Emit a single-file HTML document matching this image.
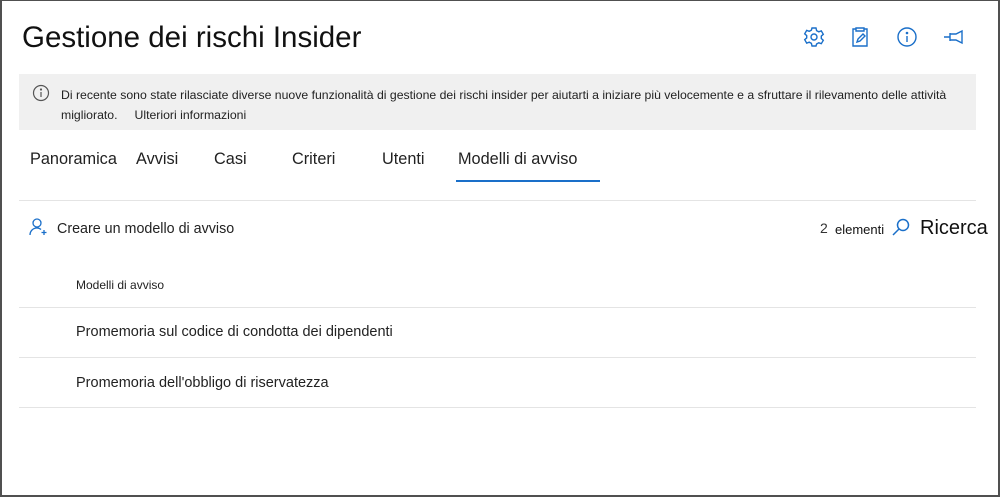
<!DOCTYPE html>
<html><head><style>
body{margin:0;width:1000px;height:498px;overflow:hidden;font-family:"Liberation Sans",Arial,sans-serif;background:#fff}
.frame{position:absolute;left:0;top:0;width:996px;height:494px;border:2px solid #505050;border-top:1px solid #505050}
.a{position:absolute;white-space:nowrap}
</style></head><body>
<div class="frame"></div>
<div class="a" style="left:22px;top:21px;font-size:29.5px;color:#111">Gestione dei rischi Insider</div>
<svg class="a" style="left:803px;top:26px" width="22" height="22" viewBox="0 0 22 22" fill="none" stroke="#1a6fc9" stroke-width="1.4"><path d="M9 2h4l.6 2.6 2.2 1.2 2.5-.9 2 3.4-2 1.8v2.4l2 1.8-2 3.4-2.5-.9-2.2 1.2L13 20H9l-.6-2.6-2.2-1.2-2.5.9-2-3.4 2-1.8V9.6l-2-1.8 2-3.4 2.5.9 2.2-1.2z"/><circle cx="11" cy="11" r="3"/></svg>
<svg class="a" style="left:850px;top:26px" width="20" height="22" viewBox="0 0 20 22" fill="none" stroke="#1a6fc9" stroke-width="1.4"><path d="M6 3H3v17h14V3h-3M6 2h8v3H6z"/><path d="M7 16l1-3 5-5 2 2-5 5z"/></svg>
<svg class="a" style="left:896px;top:26px" width="22" height="22" viewBox="0 0 22 22" fill="none" stroke="#1a6fc9" stroke-width="1.4"><circle cx="11" cy="11" r="9"/><path d="M11 10v6"/><circle cx="11" cy="7" r=".6" fill="#1a6fc9"/></svg>
<svg class="a" style="left:943px;top:28px" width="22" height="18" viewBox="0 0 22 18" fill="none" stroke="#1a6fc9" stroke-width="1.4"><path d="M1 9h6M7 5v8M7 6h6l6-3v12l-6-3H7"/></svg>
<div class="a" style="left:19px;top:74px;width:957px;height:56px;background:#f0f0f0"></div>
<svg class="a" style="left:32px;top:84px" width="18" height="18" viewBox="0 0 18 18" fill="none" stroke="#555" stroke-width="1.2"><circle cx="9" cy="9" r="7.5"/><path d="M9 8v5"/><circle cx="9" cy="5.5" r=".5" fill="#555"/></svg>
<div class="a" style="left:61px;top:88px;font-size:12.25px;color:#222">Di recente sono state rilasciate diverse nuove funzionalità di gestione dei rischi insider per aiutarti a iniziare più velocemente e a sfruttare il rilevamento delle attività</div>
<div class="a" style="left:61px;top:108px;font-size:12.25px;color:#222">migliorato.&nbsp;&nbsp;&nbsp;&nbsp; Ulteriori informazioni</div>
<div class="a" style="left:30px;top:150px;font-size:16.3px;color:#222">Panoramica</div>
<div class="a" style="left:136px;top:150px;font-size:16.3px;color:#222">Avvisi</div>
<div class="a" style="left:214px;top:150px;font-size:16.3px;color:#222">Casi</div>
<div class="a" style="left:292px;top:150px;font-size:16.3px;color:#222">Criteri</div>
<div class="a" style="left:382px;top:150px;font-size:16.3px;color:#222">Utenti</div>
<div class="a" style="left:458px;top:150px;font-size:16.3px;color:#222">Modelli di avviso</div>
<div class="a" style="left:456px;top:180px;width:144px;height:2px;background:#1a6fc9"></div>
<div class="a" style="left:19px;top:200px;width:957px;height:1px;background:#e4e4e4"></div>
<svg class="a" style="left:29px;top:217px" width="20" height="20" viewBox="0 0 20 20" fill="none" stroke="#1a6fc9" stroke-width="1.3"><circle cx="8" cy="6" r="4"/><path d="M1 18c0-4 3-7 7-7 2 0 3 .5 4 1.5M15 13v5M12.5 15.5h5"/></svg>
<div class="a" style="left:57px;top:221px;font-size:14.3px;color:#222">Creare un modello di avviso</div>
<div class="a" style="left:820px;top:220px;font-size:14px;color:#333">2</div>
<div class="a" style="left:835px;top:222px;font-size:13px;color:#111">elementi</div>
<svg class="a" style="left:891px;top:217px" width="20" height="20" viewBox="0 0 20 20" fill="none" stroke="#1a6fc9" stroke-width="1.5"><circle cx="12" cy="8" r="5.5"/><path d="M8 12l-6 6"/></svg>
<div class="a" style="left:920px;top:217px;font-size:20px;color:#111">Ricerca</div>
<div class="a" style="left:76px;top:278px;font-size:12px;color:#222">Modelli di avviso</div>
<div class="a" style="left:19px;top:307px;width:957px;height:1px;background:#e4e4e4"></div>
<div class="a" style="left:76px;top:324px;font-size:14.5px;color:#222">Promemoria sul codice di condotta dei dipendenti</div>
<div class="a" style="left:19px;top:357px;width:957px;height:1px;background:#e4e4e4"></div>
<div class="a" style="left:76px;top:375px;font-size:14.5px;color:#222">Promemoria dell'obbligo di riservatezza</div>
<div class="a" style="left:19px;top:407px;width:957px;height:1px;background:#e4e4e4"></div>
</body></html>
